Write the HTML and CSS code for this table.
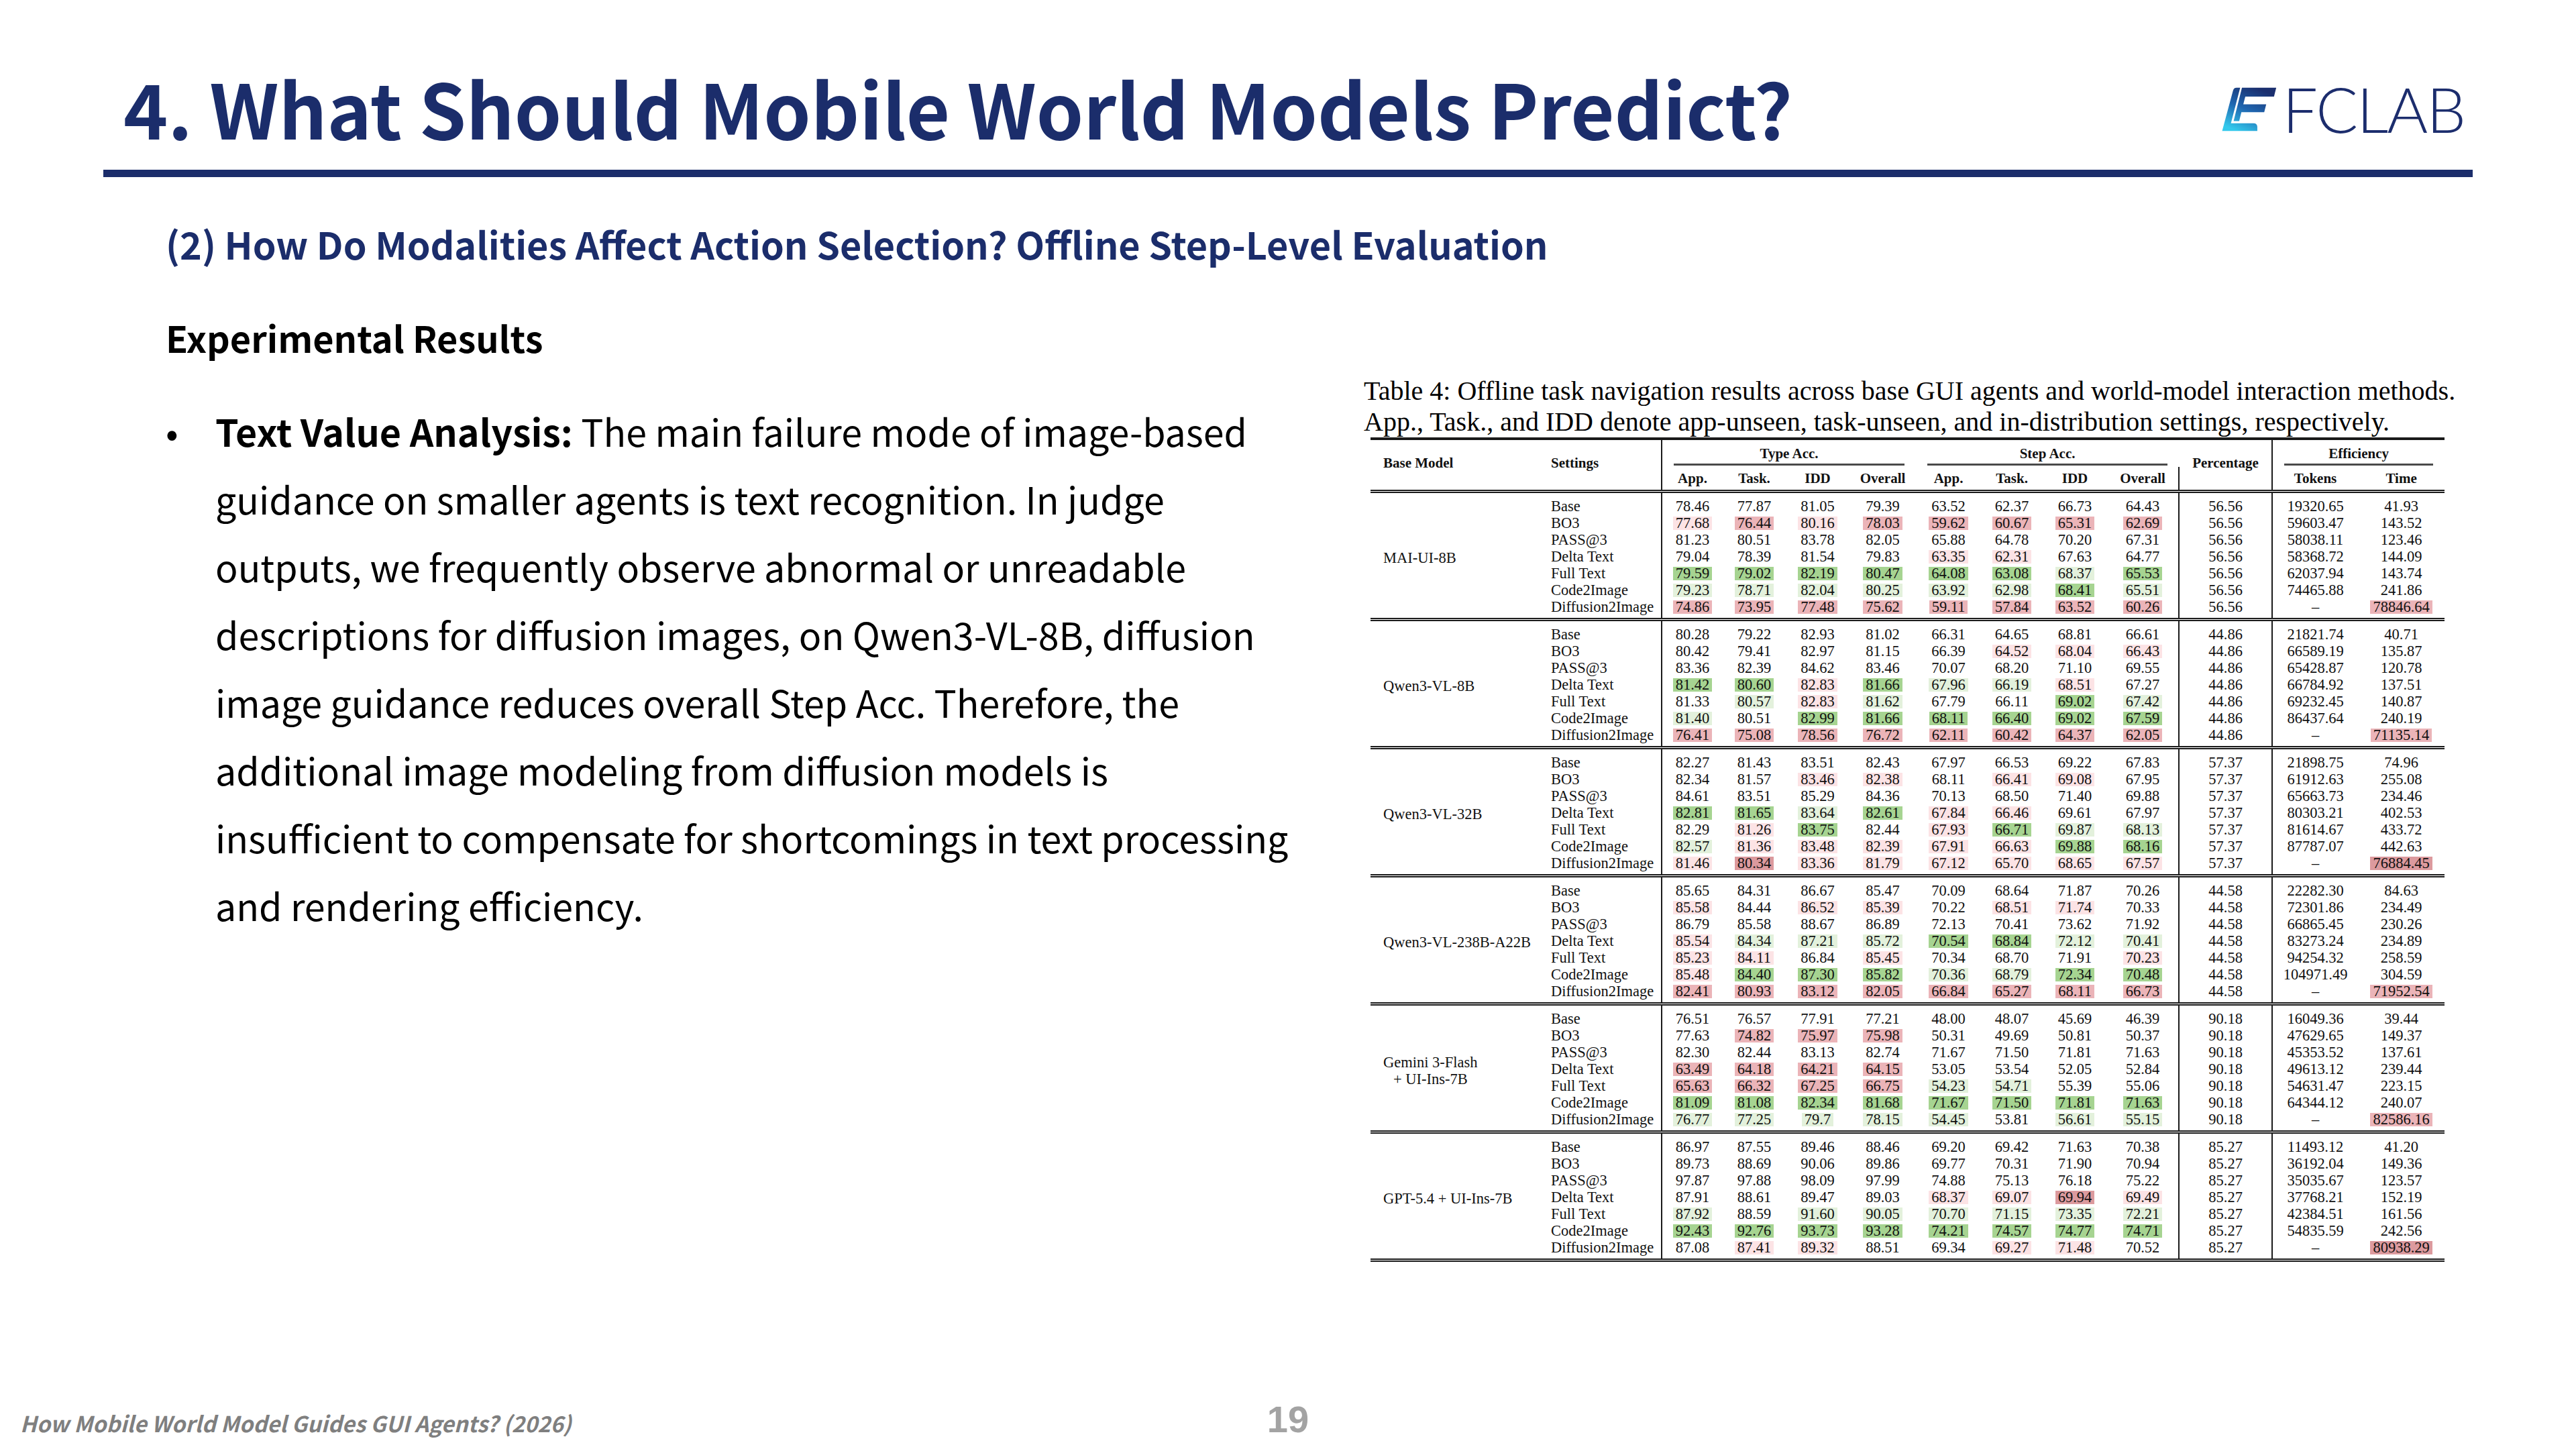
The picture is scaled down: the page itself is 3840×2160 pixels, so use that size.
FILE: index.html
```html
<!DOCTYPE html>
<html lang="en">
<head>
<meta charset="utf-8">
<title>4. What Should Mobile World Models Predict?</title>
<link rel="stylesheet" href="styles.css">
</head>
<body>
<div class="slide">
  <header class="top">
    <div class="titlebar">
      <h1 class="title">4. What Should Mobile World Models Predict?</h1>
      <div class="logo">
        <svg viewBox="40 30 255 205" aria-hidden="true">
          <defs>
            <linearGradient id="lg" gradientUnits="userSpaceOnUse" x1="200" y1="35" x2="120" y2="232">
              <stop offset="0" stop-color="#1b2f6e"/>
              <stop offset="0.5" stop-color="#1f66b0"/>
              <stop offset="1" stop-color="#34c9ec"/>
            </linearGradient>
          </defs>
          <path fill="url(#lg)" d="M96 48 Q99 35 112 35 L128 35 L86.4 195 L188 195 Q205 195 205 212 L205 230 L47 230 Z"/>
          <path fill="url(#lg)" d="M136 35 L290 35 L280 75 L151 75 L142 110 L245 110 L236 145 L133.5 145 L123.5 185 L98.5 185 Z"/>
        </svg>
        <span class="logo-text">FCLAB</span>
      </div>
    </div>
    <div class="rule"></div>
  </header>

  <main class="content">
    <h2 class="subtitle">(2) How Do Modalities Affect Action Selection? Offline Step-Level Evaluation</h2>
    <div class="columns">
      <section class="left">
        <h3 class="section">Experimental Results</h3>
        <ul class="bullets">
          <li><p><b>Text Value Analysis:</b> The main failure mode of image-based<br>guidance on smaller agents is text recognition. In judge<br>outputs, we frequently observe abnormal or unreadable<br>descriptions for diffusion images, on Qwen3-VL-8B, diffusion<br>image guidance reduces overall Step Acc. Therefore, the<br>additional image modeling from diffusion models is<br>insufficient to compensate for shortcomings in text processing<br>and rendering efficiency.</p></li>
        </ul>
      </section>

      <figure class="figure">
        <figcaption class="caption">Table 4: Offline task navigation results across base GUI agents and world-model interaction methods.<br>App., Task., and IDD denote app-unseen, task-unseen, and in-distribution settings, respectively.</figcaption>
        <table class="results">
          <colgroup>
            <col style="width:252px"><col style="width:182px">
            <col style="width:91px"><col style="width:94px"><col style="width:95px"><col style="width:99px">
            <col style="width:97px"><col style="width:92px"><col style="width:96px"><col style="width:107px">
            <col style="width:139px"><col style="width:128px"><col style="width:129px">
          </colgroup>
          <thead>
            <tr class="h1">
              <th rowspan="2" class="hl side">Base Model</th>
              <th rowspan="2" class="hl side">Settings</th>
              <th colspan="4" class="grp vl">Type Acc.</th>
              <th colspan="4" class="grp">Step Acc.</th>
              <th rowspan="2" class="side">Percentage</th>
              <th colspan="2" class="grp vl">Efficiency</th>
            </tr>
            <tr class="h2">
              <th>App.</th><th>Task.</th><th>IDD</th><th>Overall</th>
              <th>App.</th><th>Task.</th><th>IDD</th><th>Overall</th>
              <th>Tokens</th><th>Time</th>
            </tr>
          </thead>
          <tbody>
            <tr><td rowspan="7" class="model">MAI-UI-8B</td><td>Base</td><td>78.46</td><td>77.87</td><td>81.05</td><td>79.39</td><td>63.52</td><td>62.37</td><td>66.73</td><td>64.43</td><td>56.56</td><td>19320.65</td><td>41.93</td></tr>
            <tr><td>BO3</td><td><mark class="r1">77.68</mark></td><td><mark class="r2">76.44</mark></td><td><mark class="r1">80.16</mark></td><td><mark class="r2">78.03</mark></td><td><mark class="r2">59.62</mark></td><td><mark class="r2">60.67</mark></td><td><mark class="r2">65.31</mark></td><td><mark class="r2">62.69</mark></td><td>56.56</td><td>59603.47</td><td>143.52</td></tr>
            <tr><td>PASS@3</td><td>81.23</td><td>80.51</td><td>83.78</td><td>82.05</td><td>65.88</td><td>64.78</td><td>70.20</td><td>67.31</td><td>56.56</td><td>58038.11</td><td>123.46</td></tr>
            <tr><td>Delta Text</td><td>79.04</td><td>78.39</td><td>81.54</td><td>79.83</td><td><mark class="r1">63.35</mark></td><td><mark class="r1">62.31</mark></td><td>67.63</td><td>64.77</td><td>56.56</td><td>58368.72</td><td>144.09</td></tr>
            <tr><td>Full Text</td><td><mark class="g2">79.59</mark></td><td><mark class="g2">79.02</mark></td><td><mark class="g2">82.19</mark></td><td><mark class="g2">80.47</mark></td><td><mark class="g2">64.08</mark></td><td><mark class="g2">63.08</mark></td><td><mark class="g1">68.37</mark></td><td><mark class="g2">65.53</mark></td><td>56.56</td><td>62037.94</td><td>143.74</td></tr>
            <tr><td>Code2Image</td><td><mark class="g1">79.23</mark></td><td><mark class="g1">78.71</mark></td><td><mark class="g1">82.04</mark></td><td><mark class="g1">80.25</mark></td><td><mark class="g1">63.92</mark></td><td><mark class="g1">62.98</mark></td><td><mark class="g2">68.41</mark></td><td><mark class="g1">65.51</mark></td><td>56.56</td><td>74465.88</td><td>241.86</td></tr>
            <tr><td>Diffusion2Image</td><td><mark class="r2">74.86</mark></td><td><mark class="r2">73.95</mark></td><td><mark class="r2">77.48</mark></td><td><mark class="r2">75.62</mark></td><td><mark class="r2">59.11</mark></td><td><mark class="r2">57.84</mark></td><td><mark class="r2">63.52</mark></td><td><mark class="r2">60.26</mark></td><td>56.56</td><td>–</td><td><mark class="r2">78846.64</mark></td></tr>
          </tbody>
          <tbody>
            <tr><td rowspan="7" class="model">Qwen3-VL-8B</td><td>Base</td><td>80.28</td><td>79.22</td><td>82.93</td><td>81.02</td><td>66.31</td><td>64.65</td><td>68.81</td><td>66.61</td><td>44.86</td><td>21821.74</td><td>40.71</td></tr>
            <tr><td>BO3</td><td>80.42</td><td>79.41</td><td>82.97</td><td>81.15</td><td>66.39</td><td><mark class="r1">64.52</mark></td><td><mark class="r1">68.04</mark></td><td><mark class="r1">66.43</mark></td><td>44.86</td><td>66589.19</td><td>135.87</td></tr>
            <tr><td>PASS@3</td><td>83.36</td><td>82.39</td><td>84.62</td><td>83.46</td><td>70.07</td><td>68.20</td><td>71.10</td><td>69.55</td><td>44.86</td><td>65428.87</td><td>120.78</td></tr>
            <tr><td>Delta Text</td><td><mark class="g2">81.42</mark></td><td><mark class="g2">80.60</mark></td><td><mark class="r1">82.83</mark></td><td><mark class="g2">81.66</mark></td><td><mark class="g1">67.96</mark></td><td><mark class="g1">66.19</mark></td><td><mark class="r1">68.51</mark></td><td>67.27</td><td>44.86</td><td>66784.92</td><td>137.51</td></tr>
            <tr><td>Full Text</td><td>81.33</td><td><mark class="g1">80.57</mark></td><td><mark class="r1">82.83</mark></td><td><mark class="g1">81.62</mark></td><td>67.79</td><td>66.11</td><td><mark class="g2">69.02</mark></td><td><mark class="g1">67.42</mark></td><td>44.86</td><td>69232.45</td><td>140.87</td></tr>
            <tr><td>Code2Image</td><td><mark class="g1">81.40</mark></td><td>80.51</td><td><mark class="g2">82.99</mark></td><td><mark class="g2">81.66</mark></td><td><mark class="g2">68.11</mark></td><td><mark class="g2">66.40</mark></td><td><mark class="g2">69.02</mark></td><td><mark class="g2">67.59</mark></td><td>44.86</td><td>86437.64</td><td>240.19</td></tr>
            <tr><td>Diffusion2Image</td><td><mark class="r2">76.41</mark></td><td><mark class="r2">75.08</mark></td><td><mark class="r2">78.56</mark></td><td><mark class="r2">76.72</mark></td><td><mark class="r2">62.11</mark></td><td><mark class="r2">60.42</mark></td><td><mark class="r2">64.37</mark></td><td><mark class="r2">62.05</mark></td><td>44.86</td><td>–</td><td><mark class="r2">71135.14</mark></td></tr>
          </tbody>
          <tbody>
            <tr><td rowspan="7" class="model">Qwen3-VL-32B</td><td>Base</td><td>82.27</td><td>81.43</td><td>83.51</td><td>82.43</td><td>67.97</td><td>66.53</td><td>69.22</td><td>67.83</td><td>57.37</td><td>21898.75</td><td>74.96</td></tr>
            <tr><td>BO3</td><td>82.34</td><td>81.57</td><td><mark class="r1">83.46</mark></td><td><mark class="r1">82.38</mark></td><td>68.11</td><td><mark class="r1">66.41</mark></td><td><mark class="r1">69.08</mark></td><td>67.95</td><td>57.37</td><td>61912.63</td><td>255.08</td></tr>
            <tr><td>PASS@3</td><td>84.61</td><td>83.51</td><td>85.29</td><td>84.36</td><td>70.13</td><td>68.50</td><td>71.40</td><td>69.88</td><td>57.37</td><td>65663.73</td><td>234.46</td></tr>
            <tr><td>Delta Text</td><td><mark class="g2">82.81</mark></td><td><mark class="g2">81.65</mark></td><td><mark class="g1">83.64</mark></td><td><mark class="g2">82.61</mark></td><td><mark class="r1">67.84</mark></td><td><mark class="r1">66.46</mark></td><td>69.61</td><td>67.97</td><td>57.37</td><td>80303.21</td><td>402.53</td></tr>
            <tr><td>Full Text</td><td>82.29</td><td><mark class="r1">81.26</mark></td><td><mark class="g2">83.75</mark></td><td>82.44</td><td><mark class="r1">67.93</mark></td><td><mark class="g2">66.71</mark></td><td><mark class="g1">69.87</mark></td><td><mark class="g1">68.13</mark></td><td>57.37</td><td>81614.67</td><td>433.72</td></tr>
            <tr><td>Code2Image</td><td><mark class="g1">82.57</mark></td><td><mark class="r1">81.36</mark></td><td><mark class="r1">83.48</mark></td><td><mark class="r1">82.39</mark></td><td><mark class="r1">67.91</mark></td><td><mark class="r1">66.63</mark></td><td><mark class="g2">69.88</mark></td><td><mark class="g2">68.16</mark></td><td>57.37</td><td>87787.07</td><td>442.63</td></tr>
            <tr><td>Diffusion2Image</td><td><mark class="r1">81.46</mark></td><td><mark class="r3">80.34</mark></td><td><mark class="r1">83.36</mark></td><td><mark class="r1">81.79</mark></td><td><mark class="r1">67.12</mark></td><td><mark class="r1">65.70</mark></td><td><mark class="r1">68.65</mark></td><td><mark class="r1">67.57</mark></td><td>57.37</td><td>–</td><td><mark class="r3">76884.45</mark></td></tr>
          </tbody>
          <tbody>
            <tr><td rowspan="7" class="model">Qwen3-VL-238B-A22B</td><td>Base</td><td>85.65</td><td>84.31</td><td>86.67</td><td>85.47</td><td>70.09</td><td>68.64</td><td>71.87</td><td>70.26</td><td>44.58</td><td>22282.30</td><td>84.63</td></tr>
            <tr><td>BO3</td><td><mark class="r1">85.58</mark></td><td>84.44</td><td><mark class="r1">86.52</mark></td><td><mark class="r1">85.39</mark></td><td>70.22</td><td><mark class="r1">68.51</mark></td><td><mark class="r1">71.74</mark></td><td>70.33</td><td>44.58</td><td>72301.86</td><td>234.49</td></tr>
            <tr><td>PASS@3</td><td>86.79</td><td>85.58</td><td>88.67</td><td>86.89</td><td>72.13</td><td>70.41</td><td>73.62</td><td>71.92</td><td>44.58</td><td>66865.45</td><td>230.26</td></tr>
            <tr><td>Delta Text</td><td><mark class="r1">85.54</mark></td><td><mark class="g1">84.34</mark></td><td><mark class="g1">87.21</mark></td><td><mark class="g1">85.72</mark></td><td><mark class="g2">70.54</mark></td><td><mark class="g2">68.84</mark></td><td><mark class="g1">72.12</mark></td><td><mark class="g1">70.41</mark></td><td>44.58</td><td>83273.24</td><td>234.89</td></tr>
            <tr><td>Full Text</td><td><mark class="r1">85.23</mark></td><td><mark class="r1">84.11</mark></td><td>86.84</td><td><mark class="r1">85.45</mark></td><td>70.34</td><td>68.70</td><td>71.91</td><td><mark class="r1">70.23</mark></td><td>44.58</td><td>94254.32</td><td>258.59</td></tr>
            <tr><td>Code2Image</td><td><mark class="r1">85.48</mark></td><td><mark class="g2">84.40</mark></td><td><mark class="g2">87.30</mark></td><td><mark class="g2">85.82</mark></td><td><mark class="g1">70.36</mark></td><td><mark class="g1">68.79</mark></td><td><mark class="g2">72.34</mark></td><td><mark class="g2">70.48</mark></td><td>44.58</td><td>104971.49</td><td>304.59</td></tr>
            <tr><td>Diffusion2Image</td><td><mark class="r2">82.41</mark></td><td><mark class="r2">80.93</mark></td><td><mark class="r2">83.12</mark></td><td><mark class="r2">82.05</mark></td><td><mark class="r2">66.84</mark></td><td><mark class="r2">65.27</mark></td><td><mark class="r2">68.11</mark></td><td><mark class="r2">66.73</mark></td><td>44.58</td><td>–</td><td><mark class="r2">71952.54</mark></td></tr>
          </tbody>
          <tbody>
            <tr><td rowspan="7" class="model"><span class="stack">Gemini 3-Flash<br>+ UI-Ins-7B</span></td><td>Base</td><td>76.51</td><td>76.57</td><td>77.91</td><td>77.21</td><td>48.00</td><td>48.07</td><td>45.69</td><td>46.39</td><td>90.18</td><td>16049.36</td><td>39.44</td></tr>
            <tr><td>BO3</td><td>77.63</td><td><mark class="r2">74.82</mark></td><td><mark class="r2">75.97</mark></td><td><mark class="r2">75.98</mark></td><td>50.31</td><td>49.69</td><td>50.81</td><td>50.37</td><td>90.18</td><td>47629.65</td><td>149.37</td></tr>
            <tr><td>PASS@3</td><td>82.30</td><td>82.44</td><td>83.13</td><td>82.74</td><td>71.67</td><td>71.50</td><td>71.81</td><td>71.63</td><td>90.18</td><td>45353.52</td><td>137.61</td></tr>
            <tr><td>Delta Text</td><td><mark class="r2">63.49</mark></td><td><mark class="r2">64.18</mark></td><td><mark class="r2">64.21</mark></td><td><mark class="r2">64.15</mark></td><td>53.05</td><td>53.54</td><td>52.05</td><td>52.84</td><td>90.18</td><td>49613.12</td><td>239.44</td></tr>
            <tr><td>Full Text</td><td><mark class="r2">65.63</mark></td><td><mark class="r2">66.32</mark></td><td><mark class="r2">67.25</mark></td><td><mark class="r2">66.75</mark></td><td><mark class="g1">54.23</mark></td><td><mark class="g1">54.71</mark></td><td>55.39</td><td>55.06</td><td>90.18</td><td>54631.47</td><td>223.15</td></tr>
            <tr><td>Code2Image</td><td><mark class="g2">81.09</mark></td><td><mark class="g2">81.08</mark></td><td><mark class="g2">82.34</mark></td><td><mark class="g2">81.68</mark></td><td><mark class="g2">71.67</mark></td><td><mark class="g2">71.50</mark></td><td><mark class="g2">71.81</mark></td><td><mark class="g2">71.63</mark></td><td>90.18</td><td>64344.12</td><td>240.07</td></tr>
            <tr><td>Diffusion2Image</td><td><mark class="g1">76.77</mark></td><td><mark class="g1">77.25</mark></td><td><mark class="g1">79.7</mark></td><td><mark class="g1">78.15</mark></td><td><mark class="g1">54.45</mark></td><td>53.81</td><td><mark class="g1">56.61</mark></td><td><mark class="g1">55.15</mark></td><td>90.18</td><td>–</td><td><mark class="r2">82586.16</mark></td></tr>
          </tbody>
          <tbody>
            <tr><td rowspan="7" class="model">GPT-5.4 + UI-Ins-7B</td><td>Base</td><td>86.97</td><td>87.55</td><td>89.46</td><td>88.46</td><td>69.20</td><td>69.42</td><td>71.63</td><td>70.38</td><td>85.27</td><td>11493.12</td><td>41.20</td></tr>
            <tr><td>BO3</td><td>89.73</td><td>88.69</td><td>90.06</td><td>89.86</td><td>69.77</td><td>70.31</td><td>71.90</td><td>70.94</td><td>85.27</td><td>36192.04</td><td>149.36</td></tr>
            <tr><td>PASS@3</td><td>97.87</td><td>97.88</td><td>98.09</td><td>97.99</td><td>74.88</td><td>75.13</td><td>76.18</td><td>75.22</td><td>85.27</td><td>35035.67</td><td>123.57</td></tr>
            <tr><td>Delta Text</td><td>87.91</td><td>88.61</td><td>89.47</td><td>89.03</td><td><mark class="r1">68.37</mark></td><td><mark class="r1">69.07</mark></td><td><mark class="r3">69.94</mark></td><td><mark class="r1">69.49</mark></td><td>85.27</td><td>37768.21</td><td>152.19</td></tr>
            <tr><td>Full Text</td><td><mark class="g1">87.92</mark></td><td>88.59</td><td><mark class="g1">91.60</mark></td><td><mark class="g1">90.05</mark></td><td><mark class="g1">70.70</mark></td><td><mark class="g1">71.15</mark></td><td><mark class="g1">73.35</mark></td><td><mark class="g1">72.21</mark></td><td>85.27</td><td>42384.51</td><td>161.56</td></tr>
            <tr><td>Code2Image</td><td><mark class="g2">92.43</mark></td><td><mark class="g2">92.76</mark></td><td><mark class="g2">93.73</mark></td><td><mark class="g2">93.28</mark></td><td><mark class="g2">74.21</mark></td><td><mark class="g2">74.57</mark></td><td><mark class="g2">74.77</mark></td><td><mark class="g2">74.71</mark></td><td>85.27</td><td>54835.59</td><td>242.56</td></tr>
            <tr><td>Diffusion2Image</td><td>87.08</td><td><mark class="r1">87.41</mark></td><td><mark class="r1">89.32</mark></td><td>88.51</td><td>69.34</td><td><mark class="r1">69.27</mark></td><td><mark class="r1">71.48</mark></td><td>70.52</td><td>85.27</td><td>–</td><td><mark class="r3">80938.29</mark></td></tr>
          </tbody>
        </table>
      </figure>
    </div>
  </main>

  <footer class="footer">
    <span class="footnote">How Mobile World Model Guides GUI Agents? (2026)</span>
    <span class="page">19</span>
    <span></span>
  </footer>
</div>
</body>
</html>
```

FILE: styles.css
```css
* { box-sizing: border-box; }
html, body { margin: 0; padding: 0; background: #ffffff; }
body {
  font-family: "Noto Sans CJK KR", "Noto Sans", sans-serif;
  color: #000000;
}

.slide {
  width: 3840px;
  height: 2160px;
  display: flex;
  flex-direction: column;
  overflow: hidden;
  background: #ffffff;
}

/* ---------- header ---------- */
.top { padding: 102px 154px 0 154px; }
.titlebar {
  display: flex;
  align-items: center;
  justify-content: space-between;
  padding: 0 12px 0 30px;
}
.title {
  margin: 0;
  font-size: 112.5px;
  line-height: 113px;
  font-weight: 700;
  color: #1b2d6b;
  white-space: nowrap;
}
.logo {
  display: flex;
  align-items: center;
  gap: 7px;
  margin-top: 8px;
}
.logo svg { width: 85px; height: 68px; display: block; }
.logo-text {
  font-family: Lato, "Open Sans", sans-serif;
  font-weight: 300;
  font-size: 93px;
  line-height: 73px;
  color: #1c2d6d;
  letter-spacing: -2px;
}
.rule {
  margin-top: 38px;
  height: 11px;
  background: #1b2d6b;
}

/* ---------- content ---------- */
.content { padding-left: 247px; }
.subtitle {
  margin: 64px 0 0;
  font-size: 55.7px;
  line-height: 70px;
  font-weight: 700;
  color: #1b2d6b;
  white-space: nowrap;
}
.columns { display: flex; margin-top: 70px; align-items: flex-start; }
.left { width: 1786px; flex: none; }
.section {
  margin: 0;
  font-size: 54px;
  line-height: 70px;
  font-weight: 700;
  color: #000;
}
.bullets { list-style: none; margin: 54px 0 0; padding: 0; }
.bullets li { display: flex; }
.bullets li::before {
  content: "•";
  flex: none;
  width: 74px;
  padding-left: 0;
  font-size: 55px;
  line-height: 101px;
}
.bullets p {
  margin: 0;
  font-size: 55.5px;
  line-height: 101px;
  white-space: nowrap;
}
.bullets b { font-weight: 700; }

/* ---------- table figure ---------- */
.figure { margin: 92px 0 0 0; width: 1640px; flex: none; }
.caption {
  font-family: "Liberation Serif", "Times New Roman", serif;
  font-size: 40px;
  line-height: 46px;
  white-space: nowrap;
  color: #000;
}
.results {
  margin-left: 10px;
  width: 1601px;
  table-layout: fixed;
  border-collapse: collapse;
  font-family: "Liberation Serif", "Times New Roman", serif;
  color: #111;
  border-top: 4px solid #1a1a1a;
  border-bottom: 5px double #1a1a1a;
}
.results thead { border-bottom: 5px double #1a1a1a; }
.results tbody + tbody { border-top: 5px double #1a1a1a; }

.results th {
  font-weight: 700;
  font-size: 21px;
  line-height: 25px;
  text-align: center;
  white-space: nowrap;
}
.results .h1 th { padding: 8px 0 7px; }
.results .h2 th { padding: 5px 0 4px; }
.results th.side { vertical-align: middle; padding-bottom: 14px; }
.results th.hl { text-align: left; }
.results th.hl:first-child { padding-left: 19px; }
.results th.hl:nth-child(2) { padding-left: 17px; }
.results th.vl { border-left: 2px solid #1a1a1a; }
.results th.grp {
  background: linear-gradient(#4a4a4a, #4a4a4a) no-repeat;
  background-size: calc(100% - 34px) 3px;
  background-position: center bottom 2px;
}
.results .h2 th:nth-child(1) { border-left: 2px solid #1a1a1a; }
.results .h2 th:nth-child(8) { border-right: 2px solid #1a1a1a; }
.results .h2 th:nth-child(9) { border-left: 2px solid #1a1a1a; }

.results td {
  font-size: 22.5px;
  line-height: 25px;
  padding: 0;
  text-align: center;
  white-space: nowrap;
  vertical-align: middle;
}
.results tbody tr:first-child td { padding-top: 7px; }
.results tbody tr:last-child td { padding-bottom: 4px; }
.results td:nth-last-child(12) { text-align: left; padding-left: 17px; }
.results td.model { text-align: left; padding-left: 19px; padding-top: 0; padding-bottom: 0; }
.results td:nth-last-child(11),
.results td:nth-last-child(3),
.results td:nth-last-child(2) { border-left: 2px solid #1a1a1a; }

.stack { display: inline-block; text-align: center; }

mark {
  display: inline-block;
  line-height: 20px;
  padding: 0 4px;
  color: inherit;
  background: transparent;
}
mark.r1 { background: #fce3e5; }
mark.r2 { background: #ebb4b8; }
mark.r3 { background: #dc9a9e; }
mark.g1 { background: #e3f1dc; }
mark.g2 { background: #a6d491; }

/* ---------- footer ---------- */
.footer {
  margin-top: auto;
  display: grid;
  grid-template-columns: 1fr auto 1fr;
  align-items: baseline;
  padding: 0 30px 16px;
}
.footnote {
  font-size: 32.6px;
  line-height: 32px;
  font-weight: 700;
  font-style: italic;
  color: #7f7f7f;
  white-space: nowrap;
}
.page {
  font-family: "Liberation Sans", Arial, sans-serif;
  font-size: 56px;
  line-height: 56px;
  font-weight: 700;
  color: #a3a3a3;
}
```
